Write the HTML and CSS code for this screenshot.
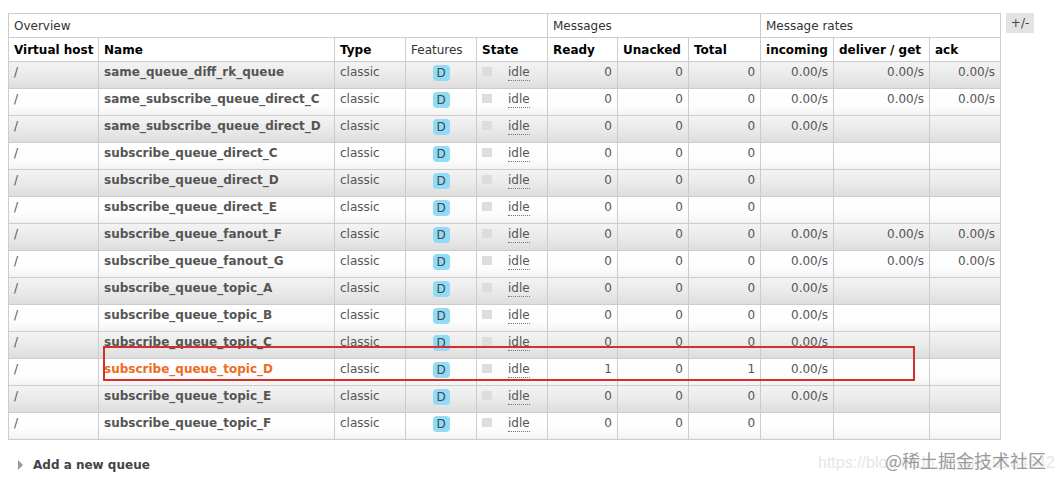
FILE: index.html
```html
<!DOCTYPE html>
<html lang="en">

<head>
    <meta charset="UTF-8">
    <title>Queues</title>
    <link rel="stylesheet" href="styles.css">
</head>

<body>
    <div class="page">
        <div class="list-wrap">
            <table class="list">
                <colgroup>
                    <col style="width:90px"><col style="width:236px"><col style="width:71px"><col style="width:71px">
                    <col style="width:71px"><col style="width:70px"><col style="width:71px"><col style="width:72px">
                    <col style="width:73px"><col style="width:96px"><col style="width:71px">
                </colgroup>
                <thead>
                    <tr class="group">
                        <th colspan="5">Overview</th>
                        <th colspan="3">Messages</th>
                        <th colspan="3">Message rates</th>
                    </tr>
                    <tr class="cols">
                        <th>Virtual host</th>
                        <th>Name</th>
                        <th>Type</th>
                        <th class="plain">Features</th>
                        <th>State</th>
                        <th>Ready</th>
                        <th>Unacked</th>
                        <th>Total</th>
                        <th>incoming</th>
                        <th>deliver / get</th>
                        <th>ack</th>
                    </tr>
                </thead>
                <tbody>
                    <tr class="alt1">
                        <td>/</td><td class="name">same_queue_diff_rk_queue</td><td>classic</td>
                        <td class="c"><span class="badge">D</span></td>
                        <td><div class="state"><span class="key"></span><abbr>idle</abbr></div></td>
                        <td class="r">0</td><td class="r">0</td><td class="r">0</td>
                        <td class="r">0.00/s</td><td class="r">0.00/s</td><td class="r">0.00/s</td>
                    </tr>
                    <tr class="alt2">
                        <td>/</td><td class="name">same_subscribe_queue_direct_C</td><td>classic</td>
                        <td class="c"><span class="badge">D</span></td>
                        <td><div class="state"><span class="key"></span><abbr>idle</abbr></div></td>
                        <td class="r">0</td><td class="r">0</td><td class="r">0</td>
                        <td class="r">0.00/s</td><td class="r">0.00/s</td><td class="r">0.00/s</td>
                    </tr>
                    <tr class="alt1">
                        <td>/</td><td class="name">same_subscribe_queue_direct_D</td><td>classic</td>
                        <td class="c"><span class="badge">D</span></td>
                        <td><div class="state"><span class="key"></span><abbr>idle</abbr></div></td>
                        <td class="r">0</td><td class="r">0</td><td class="r">0</td>
                        <td class="r">0.00/s</td><td></td><td></td>
                    </tr>
                    <tr class="alt2">
                        <td>/</td><td class="name">subscribe_queue_direct_C</td><td>classic</td>
                        <td class="c"><span class="badge">D</span></td>
                        <td><div class="state"><span class="key"></span><abbr>idle</abbr></div></td>
                        <td class="r">0</td><td class="r">0</td><td class="r">0</td>
                        <td></td><td></td><td></td>
                    </tr>
                    <tr class="alt1">
                        <td>/</td><td class="name">subscribe_queue_direct_D</td><td>classic</td>
                        <td class="c"><span class="badge">D</span></td>
                        <td><div class="state"><span class="key"></span><abbr>idle</abbr></div></td>
                        <td class="r">0</td><td class="r">0</td><td class="r">0</td>
                        <td></td><td></td><td></td>
                    </tr>
                    <tr class="alt2">
                        <td>/</td><td class="name">subscribe_queue_direct_E</td><td>classic</td>
                        <td class="c"><span class="badge">D</span></td>
                        <td><div class="state"><span class="key"></span><abbr>idle</abbr></div></td>
                        <td class="r">0</td><td class="r">0</td><td class="r">0</td>
                        <td></td><td></td><td></td>
                    </tr>
                    <tr class="alt1">
                        <td>/</td><td class="name">subscribe_queue_fanout_F</td><td>classic</td>
                        <td class="c"><span class="badge">D</span></td>
                        <td><div class="state"><span class="key"></span><abbr>idle</abbr></div></td>
                        <td class="r">0</td><td class="r">0</td><td class="r">0</td>
                        <td class="r">0.00/s</td><td class="r">0.00/s</td><td class="r">0.00/s</td>
                    </tr>
                    <tr class="alt2">
                        <td>/</td><td class="name">subscribe_queue_fanout_G</td><td>classic</td>
                        <td class="c"><span class="badge">D</span></td>
                        <td><div class="state"><span class="key"></span><abbr>idle</abbr></div></td>
                        <td class="r">0</td><td class="r">0</td><td class="r">0</td>
                        <td class="r">0.00/s</td><td class="r">0.00/s</td><td class="r">0.00/s</td>
                    </tr>
                    <tr class="alt1">
                        <td>/</td><td class="name">subscribe_queue_topic_A</td><td>classic</td>
                        <td class="c"><span class="badge">D</span></td>
                        <td><div class="state"><span class="key"></span><abbr>idle</abbr></div></td>
                        <td class="r">0</td><td class="r">0</td><td class="r">0</td>
                        <td class="r">0.00/s</td><td></td><td></td>
                    </tr>
                    <tr class="alt2">
                        <td>/</td><td class="name">subscribe_queue_topic_B</td><td>classic</td>
                        <td class="c"><span class="badge">D</span></td>
                        <td><div class="state"><span class="key"></span><abbr>idle</abbr></div></td>
                        <td class="r">0</td><td class="r">0</td><td class="r">0</td>
                        <td class="r">0.00/s</td><td></td><td></td>
                    </tr>
                    <tr class="alt1">
                        <td>/</td><td class="name">subscribe_queue_topic_C</td><td>classic</td>
                        <td class="c"><span class="badge">D</span></td>
                        <td><div class="state"><span class="key"></span><abbr>idle</abbr></div></td>
                        <td class="r">0</td><td class="r">0</td><td class="r">0</td>
                        <td class="r">0.00/s</td><td></td><td></td>
                    </tr>
                    <tr class="alt2">
                        <td>/</td><td class="name hot">subscribe_queue_topic_D</td><td>classic</td>
                        <td class="c"><span class="badge">D</span></td>
                        <td><div class="state"><span class="key"></span><abbr>idle</abbr></div></td>
                        <td class="r">1</td><td class="r">0</td><td class="r">1</td>
                        <td class="r">0.00/s</td><td></td><td></td>
                    </tr>
                    <tr class="alt1">
                        <td>/</td><td class="name">subscribe_queue_topic_E</td><td>classic</td>
                        <td class="c"><span class="badge">D</span></td>
                        <td><div class="state"><span class="key"></span><abbr>idle</abbr></div></td>
                        <td class="r">0</td><td class="r">0</td><td class="r">0</td>
                        <td class="r">0.00/s</td><td></td><td></td>
                    </tr>
                    <tr class="alt2">
                        <td>/</td><td class="name">subscribe_queue_topic_F</td><td>classic</td>
                        <td class="c"><span class="badge">D</span></td>
                        <td><div class="state"><span class="key"></span><abbr>idle</abbr></div></td>
                        <td class="r">0</td><td class="r">0</td><td class="r">0</td>
                        <td></td><td></td><td></td>
                    </tr>
                </tbody>
            </table>
            <span class="toggle">+/-</span>
        </div>

        <div class="section-toggle"><span class="arrow"></span>Add a new queue</div>

        <!-- annotation + watermark overlays -->
        <div class="mark-box"></div>
        <div class="watermark">
            <span class="wm-url">https://blog.csdn.net/u010134642</span>
            <span class="wm-site">@稀土掘金技术社区</span>
        </div>
    </div>
</body>

</html>
```

FILE: styles.css
```css
/* Global styles */
body {
    margin: 0;
    font-family: "DejaVu Sans", Verdana, sans-serif;
    font-size: 12px;
    color: #484848;
    background: #fff;
}

.page {
    position: relative;
    height: 486px;
    padding: 13px 8px 0;
    box-sizing: border-box;
    overflow: hidden;
}

.list-wrap {
    display: flex;
    align-items: flex-start;
    gap: 5px;
}

/* Queue table */
table.list {
    border-collapse: collapse;
    table-layout: fixed;
    width: 992px;
}

table.list th,
table.list td {
    border: 1px solid #ccc;
    padding: 0 5px;
    line-height: 14px;
    white-space: nowrap;
    overflow: hidden;
}

table.list th {
    height: 23px;
    text-align: left;
    vertical-align: middle;
    background: #fff;
    color: #000;
}

table.list tr.group th {
    font-weight: normal;
    color: #333;
}

table.list th.plain {
    font-weight: normal;
    color: #333;
}

table.list td {
    height: 23px;
    padding-top: 3px;
    vertical-align: top;
    color: #555;
}

tr.alt1 {
    background: linear-gradient(to bottom, #f3f3f3 0%, #eaeaea 50%, #dcdcdc 100%);
}

tr.alt2 {
    background: linear-gradient(to bottom, #fff 0%, #fdfdfd 60%, #f2f2f2 100%);
}

td.name {
    font-weight: bold;
    color: #000;
}

td.name.hot {
    color: #f06a1d;
}

td.r {
    text-align: right;
    color: #666;
}

td.c {
    text-align: center;
}

.badge {
    display: inline-block;
    width: 17px;
    height: 16px;
    line-height: 17px;
    border-radius: 4px;
    background: #92dbf5;
    color: #3d4a55;
    text-align: center;
    vertical-align: top;
}

.state {
    display: flex;
    align-items: flex-start;
    gap: 16px;
}

.state .key {
    width: 10px;
    height: 9px;
    margin-top: 2px;
    background: #ddd;
}

.state abbr {
    text-decoration: none;
    border-bottom: 1px dotted #777;
    color: #555;
    line-height: 15px;
}

.toggle {
    display: inline-block;
    width: 28px;
    height: 20px;
    line-height: 20px;
    text-align: center;
    background: #e3e3e3;
    color: #444;
}

/* Collapsed section */
.section-toggle {
    display: flex;
    align-items: center;
    margin-top: 18px;
    padding-left: 10px;
    font-weight: bold;
    color: #444;
}

.section-toggle .arrow {
    width: 0;
    height: 0;
    border-top: 5px solid transparent;
    border-bottom: 5px solid transparent;
    border-left: 5px solid #999;
    margin-right: 10px;
}

/* Overlays */
.mark-box {
    position: absolute;
    left: 103px;
    top: 346px;
    width: 808px;
    height: 31px;
    border: 2px solid #d2302e;
}

.watermark {
    position: absolute;
    left: 818px;
    top: 448px;
    width: 240px;
    height: 30px;
}

.wm-url {
    position: absolute;
    left: 0;
    top: 6px;
    font-family: "Liberation Sans", sans-serif;
    font-size: 16px;
    color: #e6e6e6;
    white-space: nowrap;
}

.wm-site {
    position: absolute;
    left: 67px;
    top: 1px;
    font-family: "Noto Sans CJK SC", sans-serif;
    font-size: 18px;
    line-height: 22px;
    color: #9a9a9a;
    text-shadow: 0 0 2px #fff;
}
```
